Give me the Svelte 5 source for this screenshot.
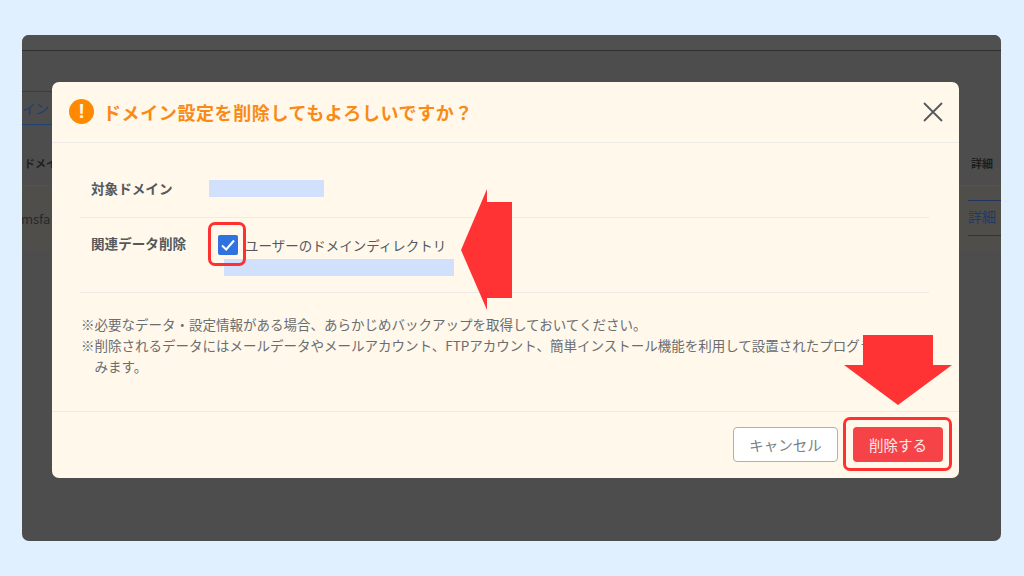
<script>
  const notes = [
    "必要なデータ・設定情報がある場合、あらかじめバックアップを取得しておいてください。",
    "削除されるデータにはメールデータやメールアカウント、FTPアカウント、簡単インストール機能を利用して設置されたプログラムも含みます。"
  ];
</script>

<div class="page">
  <div class="screen">
    <div class="topbar"></div>
    <div class="tabs"><span class="tab">イン</span></div>
    <div class="thead"><span>ドメイン</span><span>詳細</span></div>
    <div class="trow"><span class="domain">msfa</span><span class="detail">詳細</span></div>

    <div class="modal">
      <header class="head">
        <span class="alert">!</span>
        <h2>ドメイン設定を削除してもよろしいですか？</h2>
        <svg class="close" viewBox="0 0 22 22" width="22" height="22">
          <path d="M2 2 L20 20 M20 2 L2 20" stroke="#56595c" stroke-width="1.8" fill="none" />
        </svg>
      </header>

      <div class="body">
        <div class="row first">
          <div class="label">対象ドメイン</div>
          <div class="mask short"></div>
        </div>
        <div class="row second">
          <div class="label">関連データ削除</div>
          <div class="value">
            <label class="check">
              <span class="box">
                <svg viewBox="0 0 20 20" width="20" height="20">
                  <path d="M4 10.5 L8.2 14.5 L16 5.5" stroke="#fff" stroke-width="2" fill="none" />
                </svg>
              </span>
              ユーザーのドメインディレクトリ
            </label>
            <div class="mask long"></div>
          </div>
        </div>
        <ul class="notes">
          {#each notes as note}
            <li>{note}</li>
          {/each}
        </ul>
      </div>

      <footer class="foot">
        <button class="cancel">キャンセル</button>
        <button class="danger">削除する</button>
      </footer>
    </div>
  </div>

  <div class="mark mark-check"></div>
  <div class="mark mark-button"></div>
  <svg class="arrow arrow-left" viewBox="0 0 51 121" width="51" height="121">
    <path d="M0 61 L26 0 V13 H51 V109 H26 V121 Z" fill="#ff3333" />
  </svg>
  <svg class="arrow arrow-down" viewBox="0 0 108 70" width="108" height="70">
    <path d="M19 0 H89 V30 H108 L54 70 L0 30 H19 Z" fill="#ff3333" />
  </svg>
</div>

<style>
  :global(body) {
    margin: 0;
    font-family: "Noto Sans CJK JP", "Noto Sans", sans-serif;
  }

  .page {
    position: relative;
    box-sizing: border-box;
    height: 576px;
    padding: 35px 23px 35px 22px;
    background: #e0f0ff;
  }

  .screen {
    position: relative;
    height: 506px;
    background: #4d4d4d;
    border-radius: 7px;
    overflow: hidden;
    color: #222;
  }

  .topbar {
    height: 15px;
    border-bottom: 1px solid #2f2f2f;
    background: #505050;
  }

  .tabs {
    padding-top: 40px;
    height: 34px;
  }
  .tab {
    display: block;
    width: 50px;
    height: 32px;
    line-height: 32px;
    font-size: 13.5px;
    color: #1f3d6e;
    border-top: 1px solid #20406f;
    border-bottom: 1px solid #20406f;
  }

  .thead {
    box-sizing: border-box;
    display: flex;
    justify-content: space-between;
    align-items: center;
    height: 60px;
    padding: 16px 8px 0 2px;
    font-size: 11px;
    font-weight: 700;
    color: #1e1e1e;
  }

  .trow {
    box-sizing: border-box;
    display: flex;
    justify-content: space-between;
    align-items: center;
    height: 65px;
    background: #4f4e4a;
    border-top: 1px solid #55534e;
  }
  .domain {
    font-size: 13px;
    margin-left: -1px;
    color: #26282b;
  }
  .detail {
    display: block;
    box-sizing: border-box;
    width: 33px;
    height: 36px;
    line-height: 31px;
    font-size: 14px;
    color: #203a66;
    border-top: 1px solid #20385f;
    border-bottom: 1px solid #20385f;
  }

  .modal {
    position: absolute;
    left: 30px;
    top: 47px;
    width: 907px;
    height: 396px;
    display: flex;
    flex-direction: column;
    background: #fff8eb;
    border-radius: 7px;
  }

  .head {
    box-sizing: border-box;
    display: flex;
    align-items: center;
    height: 61px;
    padding: 0 15px 1px 17px;
    border-bottom: 1px solid #eeebe6;
  }
  .alert {
    width: 25px;
    height: 25px;
    flex: none;
    border-radius: 50%;
    background: #ff8a00;
    color: #fff8eb;
    text-align: center;
    font: 700 20px/25px "Liberation Sans", sans-serif;
  }
  h2 {
    flex: 1;
    margin: 0 0 0 9px;
    font-size: 18px;
    font-weight: 700;
    color: #f98a16;
    letter-spacing: 0.6px;
  }
  .close {
    flex: none;
  }

  .body {
    flex: 1;
    padding: 0 30px 0 28px;
    min-height: 0;
    color: #55595e;
  }
  .row {
    box-sizing: border-box;
    height: 75px;
    display: flex;
    border-bottom: 1px solid #eeebe6;
  }
  .row.first {
    align-items: center;
    padding: 18px 0 2px;
  }
  .row.second {
    padding-top: 17px;
  }
  .label {
    width: 129px;
    padding-left: 11px;
    box-sizing: border-box;
    font-size: 13.6px;
    line-height: 20px;
    font-weight: 700;
    color: #55595e;
  }
  .row.second .label {
    margin-top: -2px;
  }
  .mask {
    background: #d0e0fd;
  }
  .mask.short {
    width: 115px;
    height: 17px;
  }
  .value {
    display: flex;
    flex-direction: column;
  }
  .check {
    display: flex;
    align-items: center;
    gap: 7px;
    height: 20px;
    font-size: 13.5px;
    color: #55595e;
  }
  .box {
    width: 20px;
    height: 20px;
    margin-left: 9px;
    border-radius: 2px;
    background: #2f73e0;
    display: block;
  }
  .box svg {
    display: block;
  }
  .mask.long {
    width: 230px;
    height: 17px;
    margin-left: 15px;
    margin-top: 4px;
  }

  .notes {
    list-style: none;
    margin: 21px 0 0 1px;
    padding: 0;
    font-size: 13.5px;
    line-height: 21px;
    color: #6a6d70;
    width: 840px;
  }
  .notes li {
    padding-left: 1em;
    text-indent: -1em;
  }
  .notes li::before {
    content: "※";
  }

  .foot {
    box-sizing: border-box;
    height: 67px;
    display: flex;
    justify-content: flex-end;
    align-items: flex-start;
    gap: 15px;
    padding: 15px 16px 0 0;
    border-top: 1px solid #eeebe6;
  }
  button {
    font-family: inherit;
    height: 35px;
    border-radius: 4px;
    font-size: 14.5px;
    cursor: pointer;
    padding: 0;
  }
  .cancel {
    width: 105px;
    background: #fff;
    border: 1px solid #b0b0b0;
    color: #7b7f87;
  }
  .danger {
    width: 90px;
    background: #f54348;
    border: none;
    color: #ffe9e6;
  }

  .mark {
    position: absolute;
    box-sizing: border-box;
    border: 3px solid #ff3030;
    border-radius: 7px;
  }
  .mark-check {
    left: 208px;
    top: 222px;
    width: 38px;
    height: 44px;
  }
  .mark-button {
    left: 843px;
    top: 417px;
    width: 109px;
    height: 54px;
  }

  .arrow {
    position: absolute;
  }
  .arrow-left {
    left: 461px;
    top: 189px;
  }
  .arrow-down {
    left: 844px;
    top: 335px;
  }
</style>
